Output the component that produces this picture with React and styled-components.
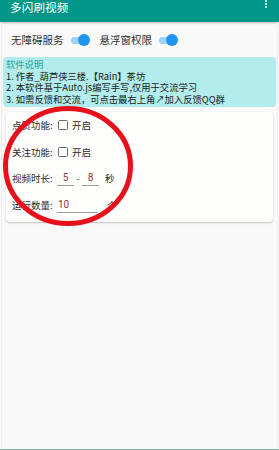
import React from "react";
import styled, { createGlobalStyle } from "styled-components";

const Global = createGlobalStyle`
  html, body { margin: 0; padding: 0; }
  body {
    width: 279px; height: 450px; overflow: hidden;
    background: #f9f9f9;
    font-family: "Noto Sans CJK SC", "Noto Sans", Roboto, sans-serif;
  }
`;

const Screen = styled.div`
  position: relative;
  width: 279px;
  height: 450px;
  display: flex;
  flex-direction: column;
  background: #f9f9f9;
  border-bottom: 1px solid #7db9a5;
  box-sizing: border-box;
`;

const AppBar = styled.div`
  height: 22px;
  background: #009688;
  display: flex;
  align-items: flex-start;
  justify-content: space-between;
  padding: 0 10px;
  box-shadow: 0 1px 2px rgba(0,0,0,0.25);
  flex-shrink: 0;
`;

const Title = styled.div`
  color: #ffffff;
  font-size: 11.5px;
  line-height: 14px;
  letter-spacing: 0.2px;
`;

const Dots = styled.div`
  display: flex;
  flex-direction: column;
  gap: 1.3px;
  margin-right: 2px;
  span {
    width: 1.8px; height: 1.8px; background: #fff; border-radius: 50%;
  }
`;

const Body = styled.div`
  flex: 1;
  border-left: 1px solid #eeeeee;
  border-right: 1px solid #eeeeee;
  margin: 0 1px;
`;

const SwitchRow = styled.div`
  display: flex;
  align-items: center;
  padding: 11px 0 0 9px;
  height: 14px;
`;

const SwitchItem = styled.div`
  display: flex;
  align-items: center;
  margin-right: 13px;
`;

const SwitchLabel = styled.span`
  font-size: 10.5px;
  color: #303030;
  line-height: 14px;
`;

const Track = styled.div`
  position: relative;
  width: 16px;
  height: 7px;
  border-radius: 4px;
  background: #9fd0f5;
  margin-left: 7px;
`;

const Thumb = styled.div`
  position: absolute;
  right: -3px;
  top: -2.5px;
  width: 12px;
  height: 12px;
  border-radius: 50%;
  background: #1e96f0;
`;

const Info = styled.div`
  margin: 10px 1px 0 1px;
  background: #b3ecec;
  border-radius: 4px;
  padding: 2px 3px 0;
  height: 50px;
  box-sizing: border-box;
  overflow: hidden;
`;

const InfoTitle = styled.div`
  color: #22a49a;
  font-size: 9.3px;
  line-height: 11.5px;
  height: 11.5px;
`;

const InfoLine = styled.div`
  color: #1a1a1a;
  font-size: 9.3px;
  line-height: 11.5px;
  height: 11.5px;
  white-space: nowrap;
`;

const Card = styled.div`
  margin: 5px 4px 0 4px;
  background: #fefefd;
  border-radius: 4px;
  box-shadow: 0 1px 2px rgba(0,0,0,0.22);
  padding: 0 6px 4px;
  display: flex;
  flex-direction: column;
  position: relative;
`;

const Row = styled.div`
  display: flex;
  align-items: center;
  height: 26.5px;
`;

const Label = styled.span`
  font-size: 9.5px;
  color: #2a2a2a;
  width: 45px;
  flex-shrink: 0;
`;

const Check = styled.span`
  width: 8px;
  height: 8px;
  border: 1.4px solid #6a6a6a;
  border-radius: 1.5px;
  margin-left: 1px;
  margin-right: 4px;
`;

const Text = styled.span`
  font-size: 9.5px;
  color: #2a2a2a;
`;

const Field = styled.span`
  display: inline-flex;
  align-items: center;
  width: ${p => p.$w}px;
  height: 16px;
  border-bottom: 1px solid #9a9a9a;
  font-family: Roboto, "Noto Sans", sans-serif;
  font-size: 10px;
  color: #8a3a3a;
  justify-content: ${p => (p.$left ? "flex-start" : "center")};
  padding-left: ${p => (p.$left ? "1px" : "0")};
  box-sizing: border-box;
`;

const Dash = styled.span`
  font-size: 9px;
  color: #333;
  width: 8px;
  text-align: center;
`;

const Unit = styled.span`
  font-size: 9.5px;
  color: #2a2a2a;
  margin-left: ${p => p.$ml}px;
`;

const Circle = styled.svg`
  position: absolute;
  left: 0;
  top: 0;
  pointer-events: none;
`;

export default function App() {
  return (
    <>
      <Global />
      <Screen>
        <AppBar>
          <Title>多闪刷视频</Title>
          <Dots><span /><span /><span /></Dots>
        </AppBar>
        <Body>
          <SwitchRow>
            <SwitchItem>
              <SwitchLabel>无障碍服务</SwitchLabel>
              <Track><Thumb /></Track>
            </SwitchItem>
            <SwitchItem>
              <SwitchLabel>悬浮窗权限</SwitchLabel>
              <Track><Thumb /></Track>
            </SwitchItem>
          </SwitchRow>
          <Info>
            <InfoTitle>软件说明</InfoTitle>
            <InfoLine>1. 作者_葫芦侠三楼.【Rain】茶坊</InfoLine>
            <InfoLine>2. 本软件基于Auto.js编写手写,仅用于交流学习</InfoLine>
            <InfoLine>3. 如需反馈和交流，可点击最右上角↗加入反馈QQ群</InfoLine>
          </Info>
          <Card>
            <Row>
              <Label>点赞功能:</Label>
              <Check />
              <Text>开启</Text>
            </Row>
            <Row>
              <Label>关注功能:</Label>
              <Check />
              <Text>开启</Text>
            </Row>
            <Row>
              <Label>视频时长:</Label>
              <Field $w={17}>5</Field>
              <Dash>-</Dash>
              <Field $w={17}>8</Field>
              <Unit $ml={6}>秒</Unit>
            </Row>
            <Row>
              <Label>运行数量:</Label>
              <Field $w={40} $left>10</Field>
              <Unit $ml={10}>个</Unit>
            </Row>
          </Card>
        </Body>
        <Circle width="279" height="450" viewBox="0 0 279 450">
          <ellipse cx="68" cy="166" rx="62.5" ry="57.5" fill="none" stroke="#e8101a" strokeWidth="5" />
        </Circle>
      </Screen>
    </>
  );
}
